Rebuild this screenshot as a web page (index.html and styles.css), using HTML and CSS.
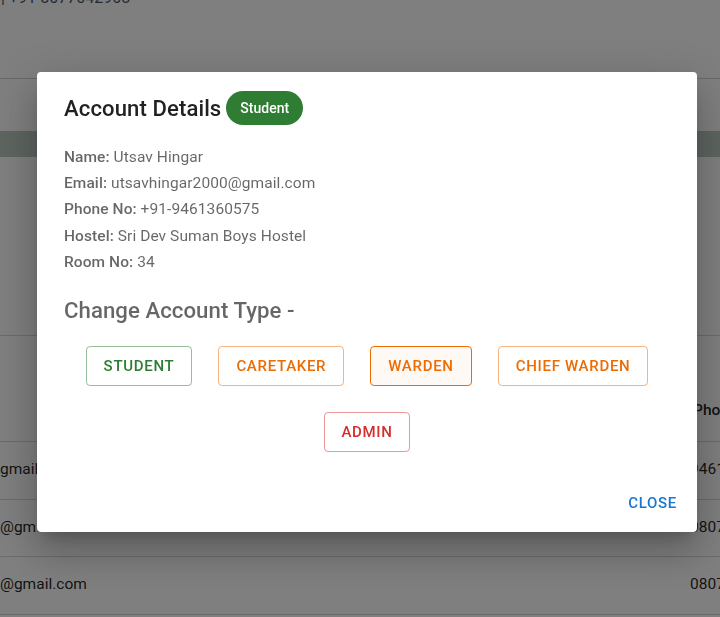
FILE: index.html
```html
<!DOCTYPE html>
<html lang="en">
<head>
<meta charset="utf-8">
<title>Account Details</title>
<link rel="stylesheet" href="styles.css">
</head>
<body>
<div class="page">
  <div class="topbar"><span class="phone">| +91-8077042908</span></div>
  <div class="section">
    <div class="band"></div>
  </div>
  <div class="table">
    <div class="thead"><span></span><span class="th">Phone No</span></div>
    <div class="row"><span class="mail first">gmail.com</span><span class="num">9461360575</span></div>
    <div class="row"><span class="mail">@gmail.com</span><span class="num">0807704290</span></div>
    <div class="row"><span class="mail">@gmail.com</span><span class="num">0807704290</span></div>
  </div>
</div>

<div class="overlay">
  <div class="dialog">
    <div class="title">
      <h2>Account Details</h2>
      <span class="chip">Student</span>
    </div>
    <div class="details">
      <p><b>Name:</b> Utsav Hingar</p>
      <p><b>Email:</b> utsavhingar2000@gmail.com</p>
      <p><b>Phone No:</b> +91-9461360575</p>
      <p><b>Hostel:</b> Sri Dev Suman Boys Hostel</p>
      <p><b>Room No:</b> 34</p>
    </div>
    <h3 class="subtitle">Change Account Type -</h3>
    <div class="buttons">
      <button class="btn green">Student</button>
      <button class="btn orange">Caretaker</button>
      <button class="btn orange active">Warden</button>
      <button class="btn orange">Chief Warden</button>
      <button class="btn red">Admin</button>
    </div>
    <div class="actions">
      <button class="close">Close</button>
    </div>
  </div>
</div>
</body>
</html>
```

FILE: styles.css
```css
* { box-sizing: border-box; }
html, body { margin: 0; padding: 0; }
body {
  font-family: Roboto, "Liberation Sans", sans-serif;
  background: #fff;
  width: 720px;
  height: 617px;
  overflow: hidden;
}
.page {
  width: 720px;
}
.topbar {
  height: 91px;
  border-bottom: 1px solid #cfcfcf;
  margin-top: -12px;
  padding-left: 1px;
}
.phone {
  font-size: 16px;
  line-height: 20px;
  color: #4a5570;
  white-space: nowrap;
}
.section {
  height: 257px;
  padding-top: 52px;
  border-bottom: 1px solid #d6d6d6;
}
.band {
  height: 26px;
  background: #bccbbf;
}
.table {
  font-size: 15.5px;
  color: rgba(0,0,0,0.87);
  overflow: hidden;
}
.thead {
  height: 106px;
  display: grid;
  grid-template-columns: 693px 1fr;
  align-items: center;
  padding-top: 42px;
  border-bottom: 1px solid #d6d6d6;
  font-weight: 500;
}
.th, .num { white-space: nowrap; overflow: hidden; }
.row {
  height: 57.5px;
  display: grid;
  grid-template-columns: 690px 1fr;
  align-items: center;
  border-bottom: 1px solid #d6d6d6;
  padding-bottom: 2px;
}
.mail { white-space: nowrap; }

.overlay {
  position: fixed;
  inset: 0;
  background: rgba(0,0,0,0.5);
  display: flex;
  align-items: flex-start;
  padding: 72px 0 0 37px;
}
.dialog {
  width: 660px;
  height: 460px;
  background: #fff;
  border-radius: 4px;
  box-shadow: 0px 11px 15px -7px rgba(0,0,0,0.2), 0px 24px 38px 3px rgba(0,0,0,0.14), 0px 9px 46px 8px rgba(0,0,0,0.12);
  padding: 19px 27px 0 27px;
  display: flex;
  flex-direction: column;
}
.title {
  display: flex;
  align-items: center;
  gap: 5px;
  height: 34px;
}
.title h2 {
  margin: 0;
  font-size: 22.1px;
  font-weight: 500;
  color: rgba(0,0,0,0.87);
  letter-spacing: 0.1px;
}
.chip {
  height: 34px;
  line-height: 34px;
  padding: 0 14px;
  border-radius: 17px;
  background: #2e7d32;
  color: #fff;
  font-size: 14px;
  font-weight: 500;
}
.details {
  margin-top: 19px;
  color: rgba(0,0,0,0.6);
  font-size: 15.5px;
  letter-spacing: 0.08px;
}
.details p {
  margin: 0;
  line-height: 26.2px;
}
.details b {
  font-weight: 500;
}
.subtitle {
  margin: 21px 0 0 0;
  font-size: 22.2px;
  letter-spacing: 0.05px;
  font-weight: 500;
  line-height: 28px;
  color: rgba(0,0,0,0.6);
}
.buttons {
  display: flex;
  flex-wrap: wrap;
  justify-content: center;
  gap: 26px 26px;
  margin-top: 22px;
}
.btn {
  font-family: Roboto, "Liberation Sans", sans-serif;
  font-size: 15px;
  font-weight: 500;
  text-transform: uppercase;
  letter-spacing: 0.7px;
  height: 40px;
  padding: 0 17px;
  border-radius: 4px;
  background: transparent;
  border: 1px solid;
}
.btn.green { color: #2e7d32; border-color: rgba(46,125,50,0.5); }
.btn.orange { color: #ed6c02; border-color: rgba(237,108,2,0.5); }
.btn.orange.active { border-color: #ed6c02; background: rgba(237,108,2,0.04); }
.btn.red { color: #d32f2f; border-color: rgba(211,47,47,0.5); padding: 0 16px; }
.actions {
  margin-top: auto;
  display: flex;
  justify-content: flex-end;
  padding-bottom: 16px;
  margin-right: -15px;
}
.close {
  font-family: Roboto, "Liberation Sans", sans-serif;
  font-size: 15px;
  font-weight: 500;
  text-transform: uppercase;
  letter-spacing: 0.7px;
  color: #1976d2;
  background: transparent;
  border: none;
  padding: 0 8px;
  height: 26px;
}
```
